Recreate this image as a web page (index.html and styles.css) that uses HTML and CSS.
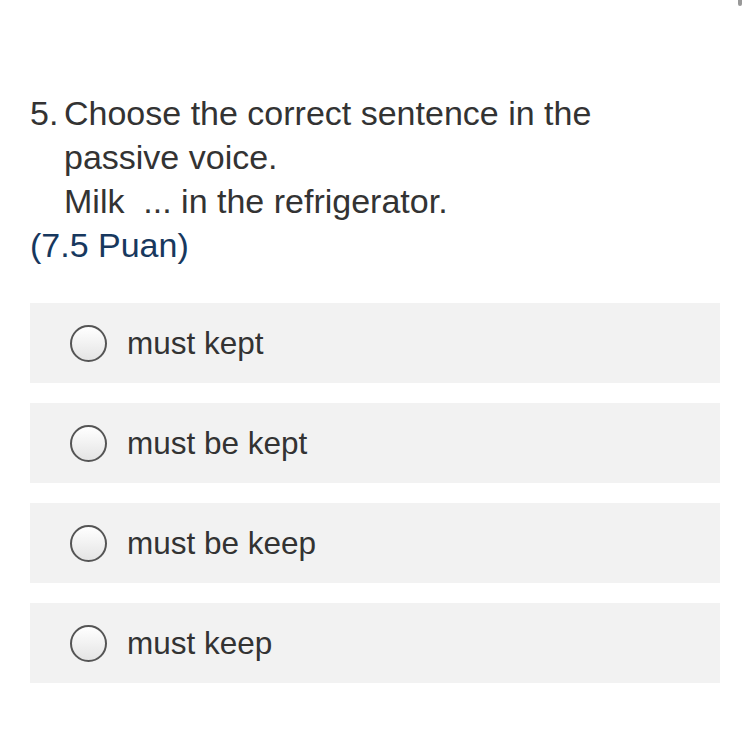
FILE: index.html
```html
<!DOCTYPE html>
<html lang="en">
<head>
    <meta charset="UTF-8">
    <meta name="viewport" content="width=device-width, initial-scale=1.0">
    <title>Question 5</title>
    <link rel="stylesheet" href="styles.css">
</head>
<body>
    <div class="scroll-thumb"></div>
    <div class="question">
        <div class="title">
            <span class="num">5.</span>
            <span class="text">Choose the correct sentence in the passive voice.<br>Milk &nbsp;... in the refrigerator.</span>
        </div>
        <div class="points">(7.5 Puan)</div>

        <ul class="options">
            <li><span class="radio"></span>must kept</li>
            <li><span class="radio"></span>must be kept</li>
            <li><span class="radio"></span>must be keep</li>
            <li><span class="radio"></span>must keep</li>
        </ul>
    </div>
</body>
</html>
```

FILE: styles.css
```css
*{
    margin: 0;
    padding: 0;
}
body{
    background: #fff;
    font-family: "Liberation Sans", Arial, sans-serif;
    color: #333;
}
.scroll-thumb{
    position: absolute;
    top: 0;
    right: 8px;
    width: 4px;
    height: 6px;
    background: #999;
    border-radius: 0 0 2px 2px;
}
.question{
    padding: 91px 30px 0 30px;
}
.title{
    display: flex;
    font-size: 34px;
    line-height: 44px;
}
.title .num{
    width: 34px;
    flex-shrink: 0;
}
.title .text{
    max-width: 600px;
}
.points{
    font-size: 34px;
    line-height: 44px;
    color: #17385e;
}
.options{
    list-style: none;
    margin-top: 36px;
    display: flex;
    flex-direction: column;
    gap: 20px;
}
.options li{
    display: flex;
    align-items: center;
    height: 80px;
    background: #f2f2f2;
    padding-left: 40px;
    font-size: 31.5px;
    color: #333;
}
.radio{
    width: 33px;
    height: 33px;
    border: 2px solid #555;
    border-radius: 50%;
    background: linear-gradient(#fff, #e4e4e4);
    margin-right: 20px;
    flex-shrink: 0;
}
```
